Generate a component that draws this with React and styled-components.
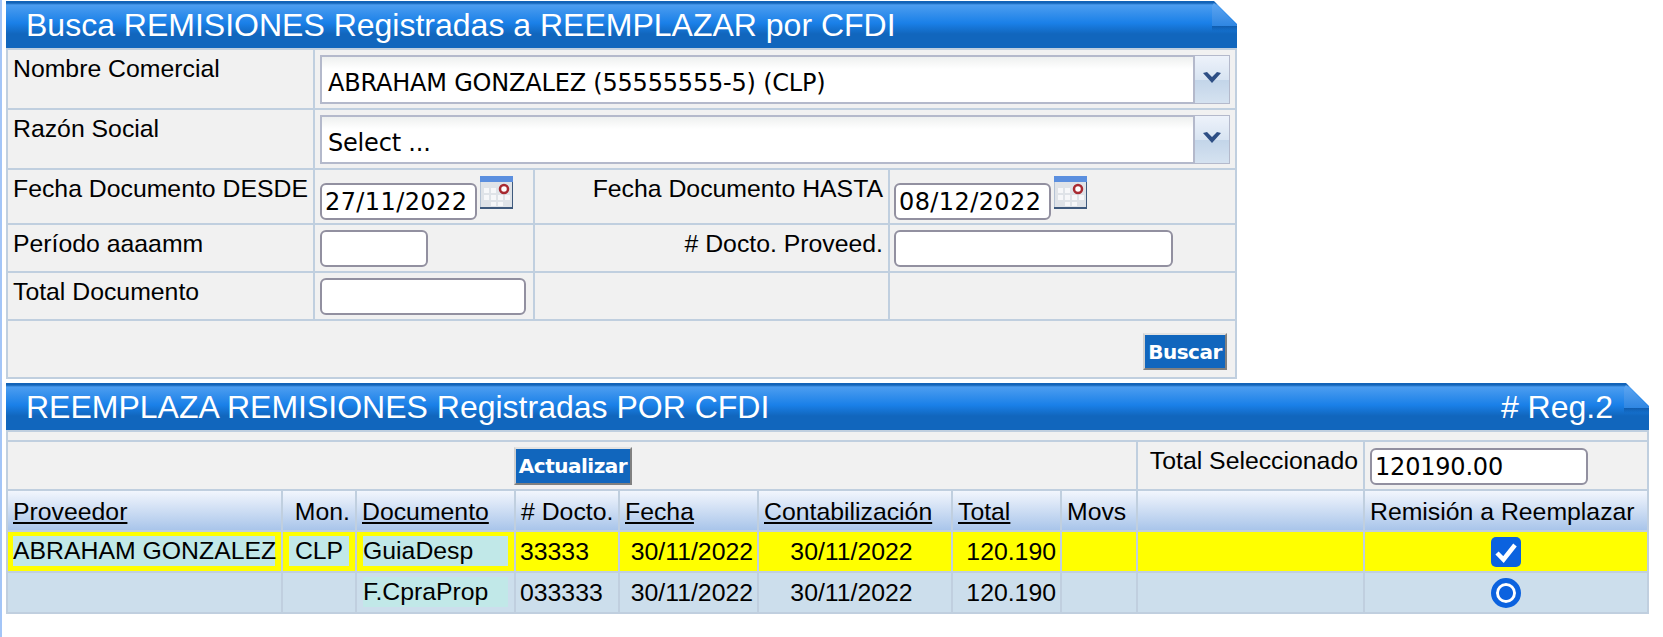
import React from "react";
import styled, { createGlobalStyle } from "styled-components";

const GlobalStyle = createGlobalStyle`
  html, body { margin: 0; padding: 0; background: #fff; }
  body { font-family: "Liberation Sans", Arial, sans-serif; color: #000; }
  #root { border-left: 2px solid #a3c5f7; min-height: 637px; box-sizing: border-box; }
`;

const Page = styled.div`
  padding: 1px 0 0 4px;
  display: flex;
  flex-direction: column;
  gap: 4px;
`;

const Panel = styled.section`
  width: ${({ $width }) => $width}px;
`;

const Header = styled.header`
  position: relative;
  height: 47px;
  box-sizing: border-box;
  display: flex;
  align-items: center;
  justify-content: space-between;
  padding: 1px 36px 0 20px;
  color: #fff;
  font-size: 32px;
  background: linear-gradient(#1263b8 0, #1263b8 2px, #4c9df0 4px, #1a80e8 22px, #1166bd 33px, #1166bd 100%);
`;

const Fold = styled.svg`
  position: absolute;
  top: 0;
  right: 0;
`;

const Grid = styled.table`
  width: 100%;
  table-layout: fixed;
  border-collapse: collapse;
  font-size: 24.8px;
  background: #f1f1f1;
  border: 2px solid #c0cfdf;
  td, th { border: 2px solid #c0cfdf; padding: 0; }
`;

const Row = styled.tr`
  height: ${({ $h }) => $h}px;
`;

const LabelCell = styled.td`
  vertical-align: top;
  padding: 5px 5px 0 !important;
  text-align: ${({ $right }) => ($right ? "right" : "left")};
  white-space: nowrap;
`;

const FieldCell = styled.td`
  vertical-align: top;
  padding: ${({ $top }) => $top ?? 5}px 5px 0 ${({ $left }) => $left ?? 5}px !important;
  white-space: nowrap;
`;

const ComboBox = styled.div`
  display: flex;
  height: 49px;
  box-sizing: border-box;
  border: 2px solid #b4b9cb;
  background: linear-gradient(#eef0ef 0, #fff 12px);
`;

const ComboText = styled.div`
  flex: 1;
  font-family: "DejaVu Sans", sans-serif;
  font-size: 24px;
  padding: ${({ $pt }) => $pt}px 0 0 6px;
  letter-spacing: -0.2px;
`;

const ComboArrow = styled.div`
  width: 36px;
  border-left: 2px solid #b4b9cb;
  margin: -1px -1px -1px 0;
  display: flex;
  align-items: center;
  justify-content: center;
  padding-bottom: 3px;
  box-sizing: border-box;
  background: linear-gradient(#edf2fa 0, #d8e4f2 50%, #c3d5e9 52%, #d5e2f0 100%);
`;

const Field = styled.input`
  width: ${({ $w }) => $w}px;
  height: 37px;
  box-sizing: border-box;
  border: 2px solid #9290a0;
  border-radius: 6px;
  background: #fff;
  padding: 0 3px;
  font-family: "DejaVu Sans", sans-serif;
  font-size: 24px;
  letter-spacing: ${({ $spacing }) => $spacing ?? 0}px;
  color: #000;
  outline: none;
  vertical-align: top;
`;

const DateField = styled(Field)`
  margin-top: 7px;
`;

const DateWrap = styled.div`
  display: flex;
  align-items: flex-start;
  gap: 3px;
`;

const ActionCell = styled.td`
  text-align: ${({ $align }) => $align};
  vertical-align: top;
  padding: ${({ $pad }) => $pad} !important;
`;

const Button = styled.button`
  border: 0;
  border-top: 2px solid #e2e2e2;
  border-left: 2px solid #d0d0d0;
  border-right: 2px solid #808080;
  border-bottom: 2px solid #808080;
  background: #1166bd;
  color: #fff;
  font-family: "DejaVu Sans", sans-serif;
  font-weight: 700;
  font-size: 20px;
  letter-spacing: -0.5px;
  height: ${({ $h }) => $h}px;
  width: ${({ $w }) => $w}px;
  padding: 0;
`;

const HeadCell = styled.th`
  font-weight: 400;
  padding: 2px 5px 0 !important;
  text-align: ${({ $right }) => ($right ? "right" : "left")};
  text-decoration: ${({ $link }) => ($link ? "underline" : "none")};
  white-space: nowrap;
  background: linear-gradient(#f2f6fd, #a9c5ea);
`;

const DataRow = styled.tr`
  height: 41px;
  background: ${({ $selected }) => ($selected ? "#ffff00" : "#ccdeec")};
`;

const DataCell = styled.td`
  padding: 0 ${({ $pr }) => $pr ?? 4}px 0 4px !important;
  white-space: nowrap;
  text-align: ${({ $align }) => $align || "left"};
`;

const TagCell = styled.td`
  padding: 3px 6px 5px !important;
`;

const Tag = styled.div`
  height: 30px;
  line-height: 30px;
  background: #c1e8e8;
  white-space: nowrap;
  text-align: ${({ $center }) => ($center ? "center" : "left")};
  margin-left: ${({ $flush }) => ($flush ? "-1px" : "0")};
`;

const CheckMark = styled.span`
  display: inline-flex;
  align-items: center;
  justify-content: center;
  width: 30px;
  height: 30px;
  border-radius: 5px;
  background: #0b62df;
  vertical-align: middle;
`;

const RadioMark = styled.span`
  display: inline-block;
  width: 30px;
  height: 30px;
  box-sizing: border-box;
  border-radius: 50%;
  border: 5px solid #0b62df;
  background: radial-gradient(circle, #0b62df 0, #0b62df 6.5px, #fff 7.5px);
  background-clip: padding-box;
  vertical-align: middle;
`;

function HeaderFold() {
  return (
    <Fold width="26" height="30" viewBox="0 0 26 30">
      <defs>
        <linearGradient id="foldFill" x1="0" y1="0" x2="0" y2="1">
          <stop offset="0" stopColor="#5ea6f1" />
          <stop offset="1" stopColor="#2f86e2" />
        </linearGradient>
        <linearGradient id="foldShadow" x1="0" y1="0" x2="0" y2="1">
          <stop offset="0" stopColor="#0c4f98" stopOpacity="0.7" />
          <stop offset="1" stopColor="#0c4f98" stopOpacity="0" />
        </linearGradient>
      </defs>
      <rect x="1" y="25" width="25" height="5" fill="url(#foldShadow)" />
      <polygon points="1,5 3,2 26,24 26,25 1,25" fill="url(#foldFill)" />
      <polygon points="3,0 26,0 26,23" fill="#fff" />
    </Fold>
  );
}

function ChevronIcon() {
  return (
    <svg width="20" height="14" viewBox="0 0 20 14">
      <path d="M1 2 L5 1 L10 6 L15 1 L19 2 L10 12 Z" fill="#2e4f85" />
    </svg>
  );
}

function CalendarIcon() {
  return (
    <svg width="33" height="33" viewBox="0 0 33 33">
      <rect x="0" y="0" width="33" height="33" fill="#b4c2d4" />
      <rect x="32" y="0" width="1" height="33" fill="#3f5a7d" />
      <rect x="0" y="31" width="33" height="2" fill="#3f5a7d" />
      <rect x="0" y="0" width="33" height="6" fill="#5b8fdf" />
      <rect x="1" y="6" width="31" height="25" fill="#dfe3e8" />
      <g fill="#f6f7f9">
        <rect x="4" y="12" width="5" height="5" />
        <rect x="11" y="12" width="5" height="5" />
        <rect x="4" y="19" width="5" height="5" />
        <rect x="11" y="19" width="5" height="5" />
        <rect x="18" y="19" width="5" height="5" />
        <rect x="25" y="19" width="5" height="5" />
        <rect x="11" y="26" width="5" height="4" />
        <rect x="18" y="26" width="5" height="4" />
      </g>
      <circle cx="24" cy="13" r="4" fill="#fff" stroke="#a82a32" strokeWidth="2.5" />
    </svg>
  );
}

function SearchPanel() {
  return (
    <Panel $width={1231}>
      <Header>
        <span>Busca REMISIONES Registradas a REEMPLAZAR por CFDI</span>
        <HeaderFold />
      </Header>
      <Grid>
        <colgroup>
          <col style={{ width: 307 }} />
          <col style={{ width: 220 }} />
          <col style={{ width: 355 }} />
          <col />
        </colgroup>
        <tbody>
          <Row $h={60}>
            <LabelCell>Nombre Comercial</LabelCell>
            <FieldCell colSpan={3}>
              <ComboBox>
                <ComboText $pt={12}>ABRAHAM GONZALEZ (55555555-5) (CLP)</ComboText>
                <ComboArrow><ChevronIcon /></ComboArrow>
              </ComboBox>
            </FieldCell>
          </Row>
          <Row $h={60}>
            <LabelCell>Razón Social</LabelCell>
            <FieldCell colSpan={3}>
              <ComboBox>
                <ComboText $pt={12}>Select ...</ComboText>
                <ComboArrow><ChevronIcon /></ComboArrow>
              </ComboBox>
            </FieldCell>
          </Row>
          <Row $h={55}>
            <LabelCell>Fecha Documento DESDE</LabelCell>
            <FieldCell $top={6}>
              <DateWrap>
                <DateField $w={157} $spacing={0.4} defaultValue="27/11/2022" />
                <CalendarIcon />
              </DateWrap>
            </FieldCell>
            <LabelCell $right>Fecha Documento HASTA</LabelCell>
            <FieldCell $top={6} $left={4}>
              <DateWrap>
                <DateField $w={157} $spacing={0.4} defaultValue="08/12/2022" />
                <CalendarIcon />
              </DateWrap>
            </FieldCell>
          </Row>
          <Row $h={48}>
            <LabelCell>Período aaaamm</LabelCell>
            <FieldCell><Field $w={108} /></FieldCell>
            <LabelCell $right># Docto. Proveed.</LabelCell>
            <FieldCell $left={4}><Field $w={279} /></FieldCell>
          </Row>
          <Row $h={48}>
            <LabelCell>Total Documento</LabelCell>
            <FieldCell><Field $w={206} /></FieldCell>
            <td />
            <td />
          </Row>
          <Row $h={58}>
            <ActionCell colSpan={4} $align="right" $pad="12px 8px 0 0">
              <Button $w={84} $h={37}>Buscar</Button>
            </ActionCell>
          </Row>
        </tbody>
      </Grid>
    </Panel>
  );
}

function ResultsPanel() {
  return (
    <Panel $width={1643}>
      <Header>
        <span>REEMPLAZA REMISIONES Registradas POR CFDI</span>
        <span># Reg.2</span>
        <HeaderFold />
      </Header>
      <Grid>
        <colgroup>
          <col style={{ width: 275 }} />
          <col style={{ width: 74 }} />
          <col style={{ width: 159 }} />
          <col style={{ width: 104 }} />
          <col style={{ width: 139 }} />
          <col style={{ width: 194 }} />
          <col style={{ width: 109 }} />
          <col style={{ width: 76 }} />
          <col style={{ width: 227 }} />
          <col />
        </colgroup>
        <tbody>
          <Row $h={10}><td colSpan={10} /></Row>
          <Row $h={49}>
            <ActionCell colSpan={8} $align="center" $pad="5px 0 0 2px">
              <Button $w={118} $h={38}>Actualizar</Button>
            </ActionCell>
            <LabelCell $right>Total Seleccionado</LabelCell>
            <FieldCell $top={6}><Field $w={218} $spacing={-0.2} defaultValue="120190.00" /></FieldCell>
          </Row>
          <Row $h={41}>
            <HeadCell $link>Proveedor</HeadCell>
            <HeadCell $right>Mon.</HeadCell>
            <HeadCell $link>Documento</HeadCell>
            <HeadCell># Docto.</HeadCell>
            <HeadCell $link>Fecha</HeadCell>
            <HeadCell $link>Contabilización</HeadCell>
            <HeadCell $link>Total</HeadCell>
            <HeadCell>Movs</HeadCell>
            <HeadCell />
            <HeadCell>Remisión a Reemplazar</HeadCell>
          </Row>
          <DataRow $selected>
            <TagCell><Tag $flush>ABRAHAM GONZALEZ</Tag></TagCell>
            <TagCell><Tag $center>CLP</Tag></TagCell>
            <TagCell><Tag>GuiaDesp</Tag></TagCell>
            <DataCell>33333</DataCell>
            <DataCell $align="right">30/11/2022</DataCell>
            <DataCell $align="center" $pr={11}>30/11/2022</DataCell>
            <DataCell $align="right">120.190</DataCell>
            <DataCell />
            <DataCell />
            <DataCell $align="center">
              <CheckMark>
                <svg width="24" height="22" viewBox="0 0 24 22">
                  <path d="M3 12 L9.5 18.5 L21 4" fill="none" stroke="#fff" strokeWidth="4.5" />
                </svg>
              </CheckMark>
            </DataCell>
          </DataRow>
          <DataRow>
            <DataCell />
            <DataCell />
            <TagCell><Tag>F.CpraProp</Tag></TagCell>
            <DataCell>033333</DataCell>
            <DataCell $align="right">30/11/2022</DataCell>
            <DataCell $align="center" $pr={11}>30/11/2022</DataCell>
            <DataCell $align="right">120.190</DataCell>
            <DataCell />
            <DataCell />
            <DataCell $align="center"><RadioMark /></DataCell>
          </DataRow>
        </tbody>
      </Grid>
    </Panel>
  );
}

export default function App() {
  return (
    <>
      <GlobalStyle />
      <Page>
        <SearchPanel />
        <ResultsPanel />
      </Page>
    </>
  );
}
